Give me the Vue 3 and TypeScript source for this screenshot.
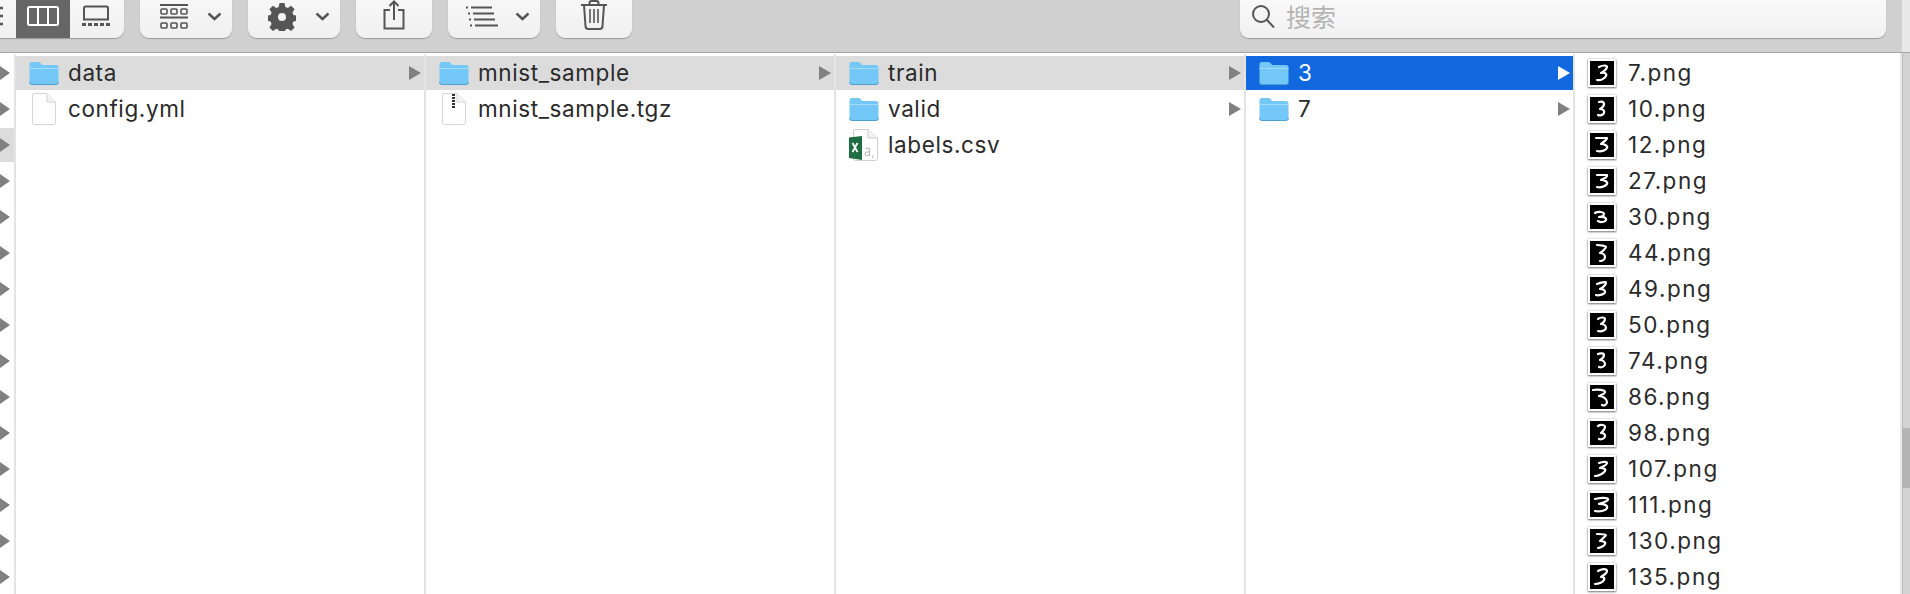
<template>
  <div class="finder">
    <header class="toolbar">
      <div class="segmented">
        <button class="seg seg-stub">
          <svg width="6" height="26" viewBox="0 0 6 26"><path d="M0 5h3M0 13h3M0 21h3" stroke="#555" stroke-width="2.4" fill="none" /></svg>
        </button>
        <button class="seg seg-on">
          <svg width="32" height="20" viewBox="0 0 32 20" fill="none" stroke="#fff" stroke-width="2"><rect x="1" y="1" width="30" height="18" rx="1.5" /><path d="M11 1v18M21 1v18" /></svg>
        </button>
        <button class="seg seg-last">
          <svg width="30" height="22" viewBox="0 0 30 22" fill="none"><path d="M3 14V3a1.500 1.500 0 0 1 1.500-1.500h21A1.500 1.500 0 0 1 27 3v11" stroke="#555" stroke-width="2" /><path d="M2 14.500h26" stroke="#555" stroke-width="2" /><path d="M1 19.500h4M7 19.500h4M13 19.500h4M19 19.500h4M25 19.500h4" stroke="#555" stroke-width="3" /></svg>
        </button>
      </div>
      <button class="tool tool-group">
        <svg width="28" height="26" viewBox="0 0 28 26" fill="none" stroke="#555"><path d="M0 1h28M0 13.500h28" stroke-width="2" /><rect x="1" y="5" width="6" height="5" rx="1" stroke-width="1.600" /><rect x="11" y="5" width="6" height="5" rx="1" stroke-width="1.600" /><rect x="21" y="5" width="6" height="5" rx="1" stroke-width="1.600" /><rect x="1" y="19" width="6" height="5" rx="1" stroke-width="1.600" /><rect x="11" y="19" width="6" height="5" rx="1" stroke-width="1.600" /><rect x="21" y="19" width="6" height="5" rx="1" stroke-width="1.600" /></svg>
        <svg class="chev" width="15" height="9" viewBox="0 0 15 9"><path d="M1.500 1.500 7.500 7l6-5.500" fill="none" stroke="#555" stroke-width="2.400" /></svg>
      </button>
      <button class="tool tool-group">
        <svg width="28" height="28" viewBox="0 0 28 28"><path fill="#555" fill-rule="evenodd" d="M11.500 0h5l.8 3.900 2.500 1 3.300-2.200 3.500 3.500-2.200 3.300 1 2.500 3.900.8v5l-3.900.8-1 2.500 2.200 3.300-3.500 3.500-3.300-2.200-2.500 1-.8 3.900h-5l-.8-3.900-2.500-1-3.300 2.200-3.500-3.500 2.200-3.300-1-2.500-3.900-.8v-5l3.900-.8 1-2.500-2.200-3.300 3.500-3.500 3.300 2.200 2.500-1zM14 10a4 4 0 1 0 0 8 4 4 0 0 0 0-8z" /></svg>
        <svg class="chev" width="15" height="9" viewBox="0 0 15 9"><path d="M1.500 1.500 7.500 7l6-5.500" fill="none" stroke="#555" stroke-width="2.400" /></svg>
      </button>
      <button class="tool tool-share">
        <svg width="22" height="30" viewBox="0 0 22 30" fill="none" stroke="#555" stroke-width="2"><path d="M7 10H1.500v18.500h19V10H15" /><path d="M11 20V1.500M6.500 6 11 1.500 15.500 6" /></svg>
      </button>
      <button class="tool tool-group tool-arrange">
        <svg width="32" height="21" viewBox="0 0 32 21" fill="none" stroke="#555" stroke-width="2"><path d="M0 1.500h2M5 1.500h21M2 7.500h2M7 7.500h21M3 13.500h2M8 13.500h21M4 19.500h2M9 19.500h23" /></svg>
        <svg class="chev" width="15" height="9" viewBox="0 0 15 9"><path d="M1.500 1.500 7.500 7l6-5.500" fill="none" stroke="#555" stroke-width="2.400" /></svg>
      </button>
      <button class="tool tool-trash">
        <svg width="26" height="30" viewBox="0 0 26 30" fill="none" stroke="#555" stroke-width="2"><path d="M0 5h26M8.500 5V3a2 2 0 0 1 2-2h5a2 2 0 0 1 2 2v2" /><path d="M3 5l1.500 21a3 3 0 0 0 3 3h11a3 3 0 0 0 3-3L23 5" /><path d="M9 9v14M13 9v14M17 9v14" stroke-width="1.600" /></svg>
      </button>
      <div class="search">
        <svg width="25" height="23" viewBox="0 0 25 23" fill="none" stroke="#555" stroke-width="2"><circle cx="10" cy="9" r="8" /><path d="M16 15l7 7.500" /></svg>
        <span class="search-text">搜索</span>
      </div>
    </header>

    <main class="browser">
      <section class="col col-stub">
        <div v-for="n in 15" :key="n" class="row" :class="{ 'row-path': n === 3 }">
          <span class="arrow"></span>
        </div>
      </section>

      <section v-for="col in columns" :key="col.id" class="col" :class="col.id">
        <div
          v-for="item in col.items"
          :key="item.name"
          class="row"
          :class="{ 'row-path': item.state === 'path', 'row-active': item.state === 'active' }"
        >
          <svg v-if="item.kind === 'folder'" class="icon" width="30" height="24" viewBox="0 0 30 24">
            <path d="M.5 3.500Q.5 1 3 1h6.500q1.500 0 2.500 1.500L13 4h14q2.500 0 2.500 2.500V21q0 2.500-2.500 2.500H3Q.5 23.500.5 21z" fill="#74c8f7" />
            <path d="M.5 7.500h29" stroke="#a3dcfb" stroke-width="1" />
            <path d="M.5 21q0 2.500 2.500 2.500h24q2.500 0 2.500-2.500" fill="none" stroke="#4f9fd3" stroke-width="1" />
          </svg>
          <svg v-else-if="item.kind === 'file'" class="icon file" width="24" height="32" viewBox="0 0 24 32">
            <path d="M.5 2Q.5.500 2 .500h13L23.500 9v20.500q0 2-2 2h-19q-2 0-2-2z" fill="#fff" stroke="#d4d4d4" />
            <path d="M15 .500V9h8.500" fill="#f3f3f3" stroke="#d4d4d4" />
          </svg>
          <svg v-else-if="item.kind === 'zip'" class="icon file" width="24" height="32" viewBox="0 0 24 32">
            <path d="M.5 2Q.5.500 2 .500h13L23.500 9v20.500q0 2-2 2h-19q-2 0-2-2z" fill="#fff" stroke="#d4d4d4" />
            <path d="M15 .500V9h8.500" fill="#f3f3f3" stroke="#d4d4d4" />
            <path d="M11.500 1v15" stroke="#333" stroke-width="3" stroke-dasharray="2 1" />
          </svg>
          <svg v-else-if="item.kind === 'excel'" class="icon excel" width="30" height="32" viewBox="0 0 30 32">
            <path d="M4.500 2Q4.500.500 6 .500h13l9.500 8.500v20.500q0 2-2 2h-20q-2 0-2-2z" fill="#fff" stroke="#cfcfcf" />
            <path d="M19 .500V9h9.500" fill="#f3f3f3" stroke="#cfcfcf" />
            <path d="M0 8.500 13 7v24L0 29z" fill="#1f6e43" />
            <path d="M3.500 14l5 9M8.500 14l-5 9" stroke="#fff" stroke-width="1.800" />
            <path d="M16.500 20c2-1.500 4-1 4 1v6M20.500 23c-3-.5-4.500.5-4.500 2.200s3 2.500 4.500-.2M24 26.500l-.5 2.500" fill="none" stroke="#bdbdbd" stroke-width="1.200" />
          </svg>
          <span v-else class="thumb">
            <svg width="24" height="24" viewBox="0 0 24 24"><path :d="item.digit" fill="none" stroke="#fff" stroke-width="2.200" stroke-linecap="round" stroke-linejoin="round" /></svg>
          </span>
          <span class="name">{{ item.name }}</span>
          <span v-if="item.kind === 'folder'" class="arrow"></span>
        </div>
      </section>

      <aside class="scrollbar">
        <span class="thumb-bar"></span>
      </aside>
    </main>
  </div>
</template>

<script setup lang="ts">
type Kind = 'folder' | 'file' | 'zip' | 'excel' | 'image'

interface Item {
  name: string
  kind: Kind
  state?: 'path' | 'active'
  digit?: string
}

// strokes of the handwritten digits in the thumbnails, in file order
const images: [string, string][] = [
  ['7.png', 'M9 6c4-2 8-2 8 0s-4 5-6 6c4-1 6 1 5 3s-5 5-9 4'],
  ['10.png', 'M9 5c3-1 5 0 5 2s-2 4-4 5c3 0 5 2 4 4s-4 3-6 2'],
  ['12.png', 'M6 5h11c0 2-4 4-6 6 4 0 7 2 6 4s-5 4-10 3'],
  ['27.png', 'M7 6h10c1 2-4 4-6 5 4 0 7 2 6 4s-6 4-10 3'],
  ['30.png', 'M5 8c3-2 9-1 9 1s-3 3-5 3c4-1 8 1 7 3s-6 3-8 1'],
  ['44.png', 'M7 4c3 0 9 1 9 2s-4 5-6 6c3 0 5 2 5 4s-2 4-5 4'],
  ['49.png', 'M7 7c3-1 9-3 9-1s-4 5-6 6c3 0 5 1 5 3s-6 4-9 3'],
  ['50.png', 'M8 6c2-2 7-2 7 0s-2 4-4 5c3 0 5 2 5 4s-4 4-8 3'],
  ['74.png', 'M8 5c2-1 6-1 6 1s-2 4-4 5c3 0 5 2 5 4s-3 4-6 3'],
  ['86.png', 'M3 5c5-1 12 0 12 2s-4 3-6 4c4 0 8 3 8 6s-3 4-5 3'],
  ['98.png', 'M8 5c3-2 7-1 7 1s-2 4-4 6c3 0 4 1 4 3s-3 4-6 3'],
  ['107.png', 'M9 6c3-1 8-2 8 0s-5 4-7 5c4 0 6 1 5 3s-6 5-10 5'],
  ['111.png', 'M5 6c4-1 12-2 13 0s-6 4-9 5c5 0 9 1 8 4s-8 4-12 3'],
  ['130.png', 'M7 5c3 0 9 0 9 1s-4 4-6 6c3 0 6 1 5 3s-5 4-7 4'],
  ['135.png', 'M8 6c3-2 9-3 9 0s-4 4-6 6c3 0 4 1 3 3s-5 4-9 4'],
]

const columns: { id: string; items: Item[] }[] = [
  {
    id: 'col-a',
    items: [
      { name: 'data', kind: 'folder', state: 'path' },
      { name: 'config.yml', kind: 'file' },
    ],
  },
  {
    id: 'col-b',
    items: [
      { name: 'mnist_sample', kind: 'folder', state: 'path' },
      { name: 'mnist_sample.tgz', kind: 'zip' },
    ],
  },
  {
    id: 'col-c',
    items: [
      { name: 'train', kind: 'folder', state: 'path' },
      { name: 'valid', kind: 'folder' },
      { name: 'labels.csv', kind: 'excel' },
    ],
  },
  {
    id: 'col-d',
    items: [
      { name: '3', kind: 'folder', state: 'active' },
      { name: '7', kind: 'folder' },
    ],
  },
  {
    id: 'col-e',
    items: images.map(([name, digit]) => ({ name, kind: 'image' as Kind, digit })),
  },
]
</script>

<style>
html,
body {
  margin: 0;
  overflow: hidden;
  background: #fff;
}
</style>

<style scoped>
.finder {
  width: 1910px;
  height: 594px;
  display: flex;
  flex-direction: column;
  overflow: hidden;
  font-family: Inter, "Liberation Sans", Arial, sans-serif;
  color: #2a2a2a;
}

.toolbar {
  flex: none;
  height: 53px;
  box-sizing: border-box;
  display: flex;
  align-items: flex-start;
  background: linear-gradient(to right, #d0d0d0 1902px, #e8e8e8 1902px);
  border-bottom: 1px solid #a6a6a6;
}

button {
  padding: 0;
  border: none;
  font: inherit;
}

.segmented {
  display: flex;
  width: 124px;
  height: 38px;
  background: linear-gradient(#f7f7f7, #f0f0f0);
  border-radius: 0 0 9px 0;
  box-shadow: 0 1px 1px #9a9a9a;
}

.seg {
  height: 38px;
  box-sizing: border-box;
  padding-bottom: 6px;
  display: flex;
  align-items: center;
  justify-content: center;
  background: transparent;
}

.seg-stub {
  width: 16px;
  justify-content: flex-start;
}

.seg-on {
  width: 54px;
  background: #666;
}

.seg-last {
  flex: 1;
  padding-right: 2px;
}

.tool {
  height: 38px;
  box-sizing: border-box;
  padding-bottom: 5px;
  display: flex;
  align-items: center;
  justify-content: center;
  background: linear-gradient(#f7f7f7, #f0f0f0);
  border-radius: 0 0 9px 9px;
  box-shadow: 0 1px 1px #9a9a9a;
}

.tool-group {
  width: 92px;
  margin-left: 16px;
  padding-left: 20px;
  justify-content: flex-start;
  gap: 19px;
}

.tool-arrange {
  padding-left: 18px;
  gap: 17px;
}

.tool-share {
  width: 76px;
  margin-left: 16px;
  padding-bottom: 9px;
}

.tool-trash {
  width: 76px;
  margin-left: 16px;
  padding-bottom: 8px;
}

.search {
  width: 646px;
  height: 38px;
  margin-left: 608px;
  box-sizing: border-box;
  padding: 0 0 5px 11px;
  display: flex;
  align-items: center;
  gap: 10px;
  background: linear-gradient(#f9f9f9, #f1f1f1);
  border-radius: 0 0 9px 9px;
  box-shadow: 0 1px 1px #9a9a9a;
}

.search-text {
  font-family: "Noto Sans CJK SC", sans-serif;
  font-size: 25px;
  line-height: 28px;
  padding-bottom: 2px;
  color: #b4b4b4;
}

.browser {
  flex: 1;
  display: flex;
  min-height: 0;
  padding-top: 1px;
  background: #fff;
}

.col {
  flex: none;
  box-sizing: border-box;
  width: 410px;
  border-right: 2px solid #e4e4e4;
}

.col-stub {
  width: 16px;
}

.col-stub .row {
  padding: 0;
}

.col-d {
  width: 329px;
}

.col-e {
  width: 325px;
  border-right: none;
}

.row {
  height: 34px;
  margin-top: 2px;
  display: flex;
  align-items: center;
  padding: 0 3px 0 13px;
}

.row-path {
  background: #dcdcdc;
}

.row-active {
  background: #1268de;
  color: #fff;
}

.icon {
  flex: none;
  width: 30px;
}

.file {
  padding: 0 3px;
  box-sizing: border-box;
}

.thumb {
  flex: none;
  width: 24px;
  height: 24px;
  margin: 0 12px 0 0;
  background: #000;
  border: 2px solid #fff;
  box-shadow: 0 1px 2px #777, 0 0 1px #999;
}

.thumb svg {
  display: block;
}

.name {
  flex: 1;
  margin-left: 9px;
  padding-bottom: 2px;
  font-size: 22.500px;
  letter-spacing: 0.6px;
  white-space: nowrap;
}

.thumb + .name {
  margin-left: 0;
  letter-spacing: 1.5px;
}

.arrow {
  flex: none;
  width: 0;
  height: 0;
  border-left: 12px solid #808080;
  border-top: 7.500px solid transparent;
  border-bottom: 7.500px solid transparent;
}

.col-stub .arrow {
  border-left-width: 10px;
}

.row-active .arrow {
  border-left-color: #fff;
}

.scrollbar {
  flex: none;
  width: 10px;
  margin-top: -1px;
  box-sizing: border-box;
  position: relative;
  background: #d3d3d3;
  border-left: 2px solid #e8e8e8;
  box-shadow: inset 1px 0 #b9b9b9;
}

.thumb-bar {
  position: absolute;
  left: 0;
  right: 0;
  top: 375px;
  height: 60px;
  background: #b4b4b4;
}
</style>
